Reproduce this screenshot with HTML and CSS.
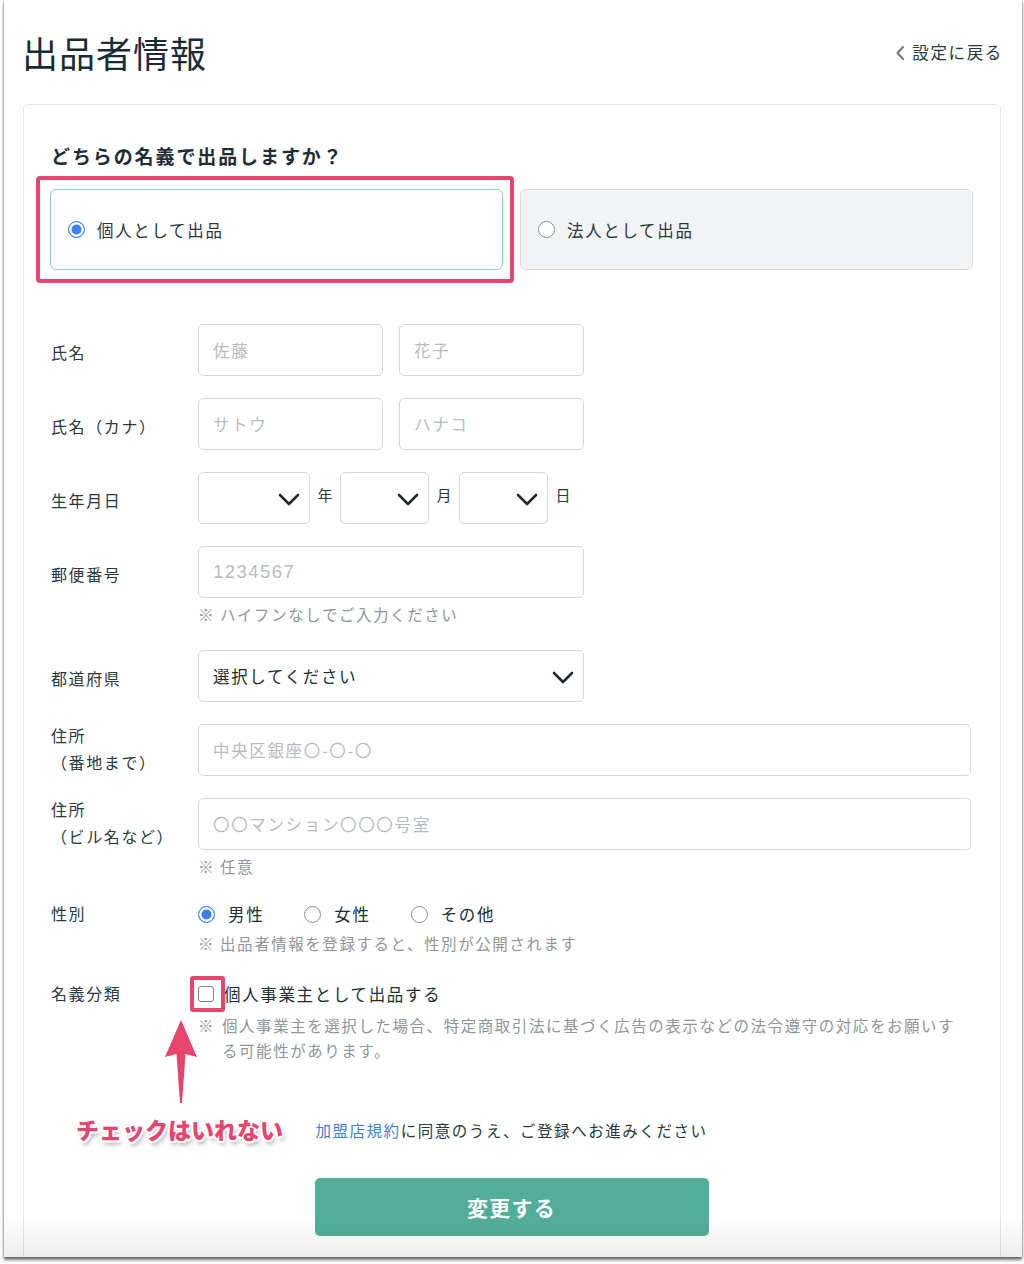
FILE: index.html
```html
<!DOCTYPE html>
<html lang="ja">
<head>
<meta charset="utf-8">
<title>出品者情報</title>
<link rel="stylesheet" href="styles.css">
</head>
<body>
<div class="window">
  <header class="page-head">
    <h1 class="title">出品者情報</h1>
    <a class="back" href="#">
      <svg class="back-icon" width="10" height="16" viewBox="0 0 10 16"><path d="M8 2 L2.5 8 L8 14" fill="none" stroke="#6f777c" stroke-width="2" stroke-linecap="round" stroke-linejoin="round"/></svg>
      設定に戻る
    </a>
  </header>

  <section class="card">
    <h2 class="question">どちらの名義で出品しますか？</h2>
    <div class="choice-grid">
      <label class="choice choice-active">
        <span class="radio radio-on"></span>
        <span class="choice-text">個人として出品</span>
        <span class="mark-box"></span>
      </label>
      <label class="choice choice-off">
        <span class="radio"></span>
        <span class="choice-text">法人として出品</span>
      </label>
    </div>

    <div class="form">
      <div class="row">
        <div class="label">氏名</div>
        <div class="field">
          <div class="pair">
            <div class="input w-half ph">佐藤</div>
            <div class="input w-half ph">花子</div>
          </div>
        </div>
      </div>

      <div class="row">
        <div class="label">氏名（カナ）</div>
        <div class="field">
          <div class="pair">
            <div class="input w-half ph">サトウ</div>
            <div class="input w-half ph">ハナコ</div>
          </div>
        </div>
      </div>

      <div class="row">
        <div class="label">生年月日</div>
        <div class="field">
          <div class="dates">
            <div class="input select w-year"><span></span><svg class="chev" width="22" height="13" viewBox="0 0 22 13"><path d="M2 2 L11 11 L20 2" fill="none" stroke="#1f2a30" stroke-width="2.6" stroke-linecap="round" stroke-linejoin="round"/></svg></div>
            <span class="unit">年</span>
            <div class="input select w-md"><span></span><svg class="chev" width="22" height="13" viewBox="0 0 22 13"><path d="M2 2 L11 11 L20 2" fill="none" stroke="#1f2a30" stroke-width="2.6" stroke-linecap="round" stroke-linejoin="round"/></svg></div>
            <span class="unit">月</span>
            <div class="input select w-md"><span></span><svg class="chev" width="22" height="13" viewBox="0 0 22 13"><path d="M2 2 L11 11 L20 2" fill="none" stroke="#1f2a30" stroke-width="2.6" stroke-linecap="round" stroke-linejoin="round"/></svg></div>
            <span class="unit">日</span>
          </div>
        </div>
      </div>

      <div class="row row-hint">
        <div class="label">郵便番号</div>
        <div class="field">
          <div class="input w-mid ph num">1234567</div>
          <p class="hint">※ ハイフンなしでご入力ください</p>
        </div>
      </div>

      <div class="row">
        <div class="label">都道府県</div>
        <div class="field">
          <div class="input select w-mid"><span class="sel-text">選択してください</span><svg class="chev" width="22" height="13" viewBox="0 0 22 13"><path d="M2 2 L11 11 L20 2" fill="none" stroke="#1f2a30" stroke-width="2.6" stroke-linecap="round" stroke-linejoin="round"/></svg></div>
        </div>
      </div>

      <div class="row">
        <div class="label label-two">住所<br>（番地まで）</div>
        <div class="field">
          <div class="input w-full ph">中央区銀座〇-〇-〇</div>
        </div>
      </div>

      <div class="row row-hint2">
        <div class="label label-two">住所<br>（ビル名など）</div>
        <div class="field">
          <div class="input w-full ph">〇〇マンション〇〇〇号室</div>
          <p class="hint">※ 任意</p>
        </div>
      </div>

      <div class="row row-gender">
        <div class="label label-line">性別</div>
        <div class="field">
          <div class="radios">
            <span class="opt"><span class="radio radio-on"></span>男性</span>
            <span class="opt"><span class="radio"></span>女性</span>
            <span class="opt"><span class="radio"></span>その他</span>
          </div>
          <p class="hint">※ 出品者情報を登録すると、性別が公開されます</p>
        </div>
      </div>

      <div class="row row-last">
        <div class="label label-line">名義分類</div>
        <div class="field">
          <div class="check-line">
            <span class="check-wrap"><span class="checkbox"></span><span class="check-mark"></span></span>
            <span class="check-text">個人事業主として出品する</span>
          </div>
          <p class="hint hint-wrap"><span class="hint-mark">※</span><span>個人事業主を選択した場合、特定商取引法に基づく広告の表示などの法令遵守の対応をお願いする可能性があります。</span></p>
        </div>
      </div>
    </div>

    <div class="submit">
      <p class="agree"><a class="link" href="#">加盟店規約</a>に同意のうえ、ご登録へお進みください</p>
      <button class="btn" type="button">変更する</button>
    </div>
  </section>

  <svg class="arrow" width="40" height="90" viewBox="0 0 40 90">
    <path d="M20 2 L36 39 L24.5 36 L21 85 L19 85 L15.5 36 L4 39 Z" fill="#e9446e"/>
  </svg>
  <div class="caption">チェックはいれない</div>
  <div class="top-fade"></div>
</div>
</body>
</html>
```

FILE: styles.css
```css
* { box-sizing: border-box; }

html, body {
  margin: 0;
  padding: 0;
  background: #ffffff;
}

body {
  width: 1024px;
  height: 1264px;
  overflow: hidden;
  font-family: "Noto Sans CJK JP", "Noto Sans", sans-serif;
  color: #2a3840;
}

.window {
  position: relative;
  margin-left: 4px;
  width: 1018px;
  height: 1257px;
  background: #ffffff;
  padding: 32px 21px 0 19px;
  box-shadow: 0 0 2px rgba(0, 0, 0, 0.35), 0 3px 3px rgba(0, 0, 0, 0.55);
  overflow: hidden;
}

.window::after {
  content: "";
  position: absolute;
  left: 0;
  right: 0;
  bottom: 0;
  height: 40px;
  background: linear-gradient(rgba(0, 0, 0, 0), rgba(0, 0, 0, 0.07));
  pointer-events: none;
}

.top-fade {
  position: absolute;
  left: 0;
  top: 0;
  width: 100%;
  height: 22px;
  background: linear-gradient(#ffffff, rgba(255, 255, 255, 0));
}

.page-head {
  display: flex;
  justify-content: space-between;
  align-items: center;
  height: 40px;
}

.title {
  margin: 0 0 0 -1px;
  font-size: 36px;
  line-height: 40px;
  font-weight: 400;
  letter-spacing: 1px;
  color: #1b2a35;
}

.back {
  display: flex;
  align-items: center;
  gap: 7px;
  font-size: 16.5px;
  letter-spacing: 0.1em;
  color: #2a3840;
  text-decoration: none;
  margin-right: -2px;
}

.back-icon { margin-top: 1px; }

.card {
  margin-top: 32px;
  border: 1px solid #e4e7ea;
  border-radius: 4px;
  height: 1200px;
  padding: 37px 27px 0 26px;
}

.question {
  margin: 0 0 0 1px;
  font-size: 19px;
  line-height: 28px;
  font-weight: 700;
  letter-spacing: 0.1em;
  color: #1f2d36;
}

.choice-grid {
  margin-top: 19px;
  display: grid;
  grid-template-columns: 1fr 1fr;
  gap: 17px;
}

.choice {
  position: relative;
  display: flex;
  align-items: center;
  height: 81px;
  padding-left: 17px;
  border-radius: 6px;
  font-size: 16.5px;
  letter-spacing: 0.1em;
}

.choice-active {
  border: 1.5px solid #86ceb8;
  background: #ffffff;
}

.choice-off {
  border: 1.5px solid #d9dcdf;
  background: #f2f3f4;
}

.choice-text { margin-left: 12px; }

.mark-box {
  position: absolute;
  left: -15px;
  top: -14px;
  right: -12px;
  bottom: -14px;
  border: 4px solid #e9446e;
  border-radius: 4px;
}

.radio {
  display: inline-block;
  flex-shrink: 0;
  width: 17px;
  height: 17px;
  border-radius: 50%;
  border: 1.5px solid #8a8f93;
  background: #ffffff;
}

.radio-on {
  border: 1.5px solid #3b7ff0;
  background: #3b7ff0;
  box-shadow: inset 0 0 0 2.5px #ffffff;
}

.form {
  margin-top: 54px;
}

.row {
  display: flex;
  align-items: flex-start;
  margin-bottom: 22px;
}

.row-hint { margin-bottom: 25px; }
.row-hint2 { margin-bottom: 24px; }
.row-gender { margin-bottom: 27px; }
.row-last { margin-bottom: 0; }

.label {
  width: 148px;
  flex-shrink: 0;
  height: 52px;
  display: flex;
  align-items: center;
  padding-left: 1px;
  padding-top: 3px;
  font-size: 16px;
  letter-spacing: 0.1em;
  color: #2a3840;
}

.label-two {
  line-height: 27px;
  padding-top: 0;
  padding-bottom: 2px;
}

.label-line {
  height: auto;
  padding-top: 0;
  line-height: 24px;
}

.field { flex: 1; min-width: 0; }

.pair { display: flex; gap: 16px; }

.input {
  height: 52px;
  border: 1px solid #d3d8dc;
  border-radius: 5px;
  background: #ffffff;
  display: flex;
  align-items: center;
  padding: 0 14px;
  font-size: 16.5px;
  letter-spacing: 0.1em;
  color: #2a3840;
}

.ph { color: #b6bcc1; }
.num {
  font-family: "Liberation Sans", "Noto Sans", sans-serif;
  font-size: 18.5px;
  letter-spacing: 0.08em;
}

.w-half { width: 185px; }
.w-mid { width: 386px; }
.w-full { width: 773px; }
.w-year { width: 112px; }
.w-md { width: 89px; }

.select { justify-content: space-between; padding-right: 9px; }
.sel-text { color: #222e35; }
.chev { display: block; margin-top: 2px; }

.dates {
  display: flex;
  align-items: flex-start;
}

.unit {
  width: 30px;
  text-align: center;
  font-size: 15px;
  line-height: 20px;
  padding-top: 13px;
  color: #2a3840;
}

.hint {
  margin: 5px 0 0;
  font-size: 15.5px;
  line-height: 22px;
  letter-spacing: 0.1em;
  color: #8e969b;
}

.hint-wrap {
  display: flex;
  line-height: 25px;
  margin-top: 6px;
  padding-right: 14px;
}

.hint-mark { width: 24px; flex-shrink: 0; }

.radios {
  display: flex;
  align-items: center;
  height: 26px;
  font-size: 16.5px;
  letter-spacing: 0.1em;
  color: #222e35;
}

.opt {
  display: flex;
  align-items: center;
  gap: 13px;
  margin-right: 40px;
}

.check-line {
  display: flex;
  align-items: center;
  height: 26px;
}

.check-wrap {
  position: relative;
  width: 26px;
  flex-shrink: 0;
  height: 26px;
  display: flex;
  align-items: center;
}

.checkbox {
  display: block;
  width: 16px;
  height: 16px;
  border: 1.5px solid #7c8286;
  border-radius: 3px;
  background: #ffffff;
}

.check-mark {
  position: absolute;
  left: -8px;
  top: -5px;
  width: 35px;
  height: 36px;
  border: 4px solid #e9446e;
  border-radius: 3px;
}

.check-text {
  font-size: 16.5px;
  letter-spacing: 0.1em;
  color: #222e35;
}

.submit {
  margin-top: 55px;
  display: flex;
  flex-direction: column;
  align-items: center;
}

.agree {
  margin: 0;
  font-size: 15.5px;
  line-height: 24px;
  letter-spacing: 0.1em;
  color: #2a3840;
}

.link { color: #3d7fd8; text-decoration: none; }

.btn {
  margin-top: 36px;
  width: 394px;
  height: 58px;
  border: none;
  border-radius: 5px;
  background: #53ae99;
  color: #ffffff;
  font-family: "Noto Sans CJK JP", "Noto Sans", sans-serif;
  font-size: 21px;
  font-weight: 700;
  letter-spacing: 0.06em;
}

.arrow {
  position: absolute;
  left: 157px;
  top: 1018px;
}

.caption {
  position: absolute;
  left: 72px;
  top: 1113px;
  font-size: 23px;
  line-height: 32px;
  font-weight: 900;
  color: #e9446e;
  letter-spacing: 0;
  text-shadow:
    2px 0 0 #fff, -2px 0 0 #fff, 0 2px 0 #fff, 0 -2px 0 #fff,
    1.5px 1.5px 0 #fff, -1.5px 1.5px 0 #fff, 1.5px -1.5px 0 #fff, -1.5px -1.5px 0 #fff,
    2px 4px 4px rgba(0, 0, 0, 0.35);
}
```
